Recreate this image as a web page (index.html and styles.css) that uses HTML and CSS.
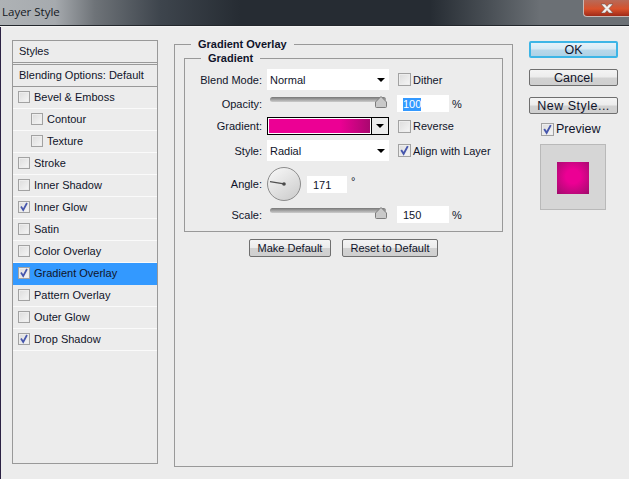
FILE: index.html
```html
<!DOCTYPE html>
<html lang="en">
<head>
<meta charset="utf-8">
<title>Layer Style</title>
<link rel="stylesheet" href="styles.css">
</head>
<body>
<div class="dialog">
  <header class="titlebar">
    <span class="title">Layer Style</span>
    <span class="close"><svg width="14" height="11" viewBox="0 0 14 11"><path d="M1 1h4l2 2.500L9 1h4L9 5.500 13 10H9L7 7.500 5 10H1l4-4.500z" fill="#f4f0ee" stroke="#5a4a48" stroke-width=".5"/></svg></span>
  </header>
  <div class="content">
    <aside class="styles">
      <div class="styles-head">Styles</div>
      <div class="styles-blend">Blending Options: Default</div>
      <div class="row"><i class="cb"></i>Bevel &amp; Emboss</div>
      <div class="row sub"><i class="cb"></i>Contour</div>
      <div class="row sub"><i class="cb"></i>Texture</div>
      <div class="row"><i class="cb"></i>Stroke</div>
      <div class="row"><i class="cb"></i>Inner Shadow</div>
      <div class="row"><i class="cb"><svg class="tick" viewBox="0 0 10 10"><path d="M2 4.500l2.200 3.500L8 1" /></svg></i>Inner Glow</div>
      <div class="row"><i class="cb"></i>Satin</div>
      <div class="row"><i class="cb"></i>Color Overlay</div>
      <div class="row active"><i class="cb"><svg class="tick" viewBox="0 0 10 10"><path d="M2 4.500l2.200 3.500L8 1" /></svg></i>Gradient Overlay</div>
      <div class="row"><i class="cb"></i>Pattern Overlay</div>
      <div class="row"><i class="cb"></i>Outer Glow</div>
      <div class="row"><i class="cb"><svg class="tick" viewBox="0 0 10 10"><path d="M2 4.500l2.200 3.500L8 1" /></svg></i>Drop Shadow</div>
    </aside>

    <fieldset class="outer">
      <legend>Gradient Overlay</legend>
      <fieldset class="inner">
        <legend>Gradient</legend>
        <div class="form-row h21">
          <label class="lbl">Blend Mode:</label>
          <div class="select">Normal<i class="caret"></i></div>
          <div class="check"><i class="cb big"></i>Dither</div>
        </div>
        <div class="form-row h17">
          <label class="lbl">Opacity:</label>
          <div class="slider"><svg class="thumb" width="12" height="12" viewBox="0 0 12 12"><path d="M6 .5L11.500 6v4.500q0 1-1 1h-9q-1 0-1-1V6z" fill="#c9c9c9" stroke="#7c7c7c"/></svg></div>
          <div class="field"><span class="sel">100</span></div>
          <span class="unit">%</span>
        </div>
        <div class="form-row h18">
          <label class="lbl">Gradient:</label>
          <div class="gradient"><div class="swatch"></div><div class="swatch-btn"><i class="caret"></i></div></div>
          <div class="check"><i class="cb big"></i>Reverse</div>
        </div>
        <div class="form-row h21">
          <label class="lbl">Style:</label>
          <div class="select">Radial<i class="caret"></i></div>
          <div class="check"><i class="cb big"><svg class="tick" viewBox="0 0 10 10"><path d="M2 4.500l2.200 3.500L8 1" /></svg></i>Align with Layer</div>
        </div>
        <div class="form-row h34 angle-row">
          <label class="lbl">Angle:</label>
          <svg class="dial" width="34" height="34" viewBox="0 0 34 34">
            <defs><linearGradient id="dg" x1="0" y1="0" x2="0.700" y2="1"><stop offset="0" stop-color="#fafafa"/><stop offset="1" stop-color="#cfcfcf"/></linearGradient></defs>
            <circle cx="17" cy="17" r="16.500" fill="url(#dg)" stroke="#8c8c8c"/>
            <path d="M3 14.600L17 16.800" stroke="#4f4f4f" stroke-width="1.200"/>
            <circle cx="17" cy="17" r="1.800" fill="#4a4a4a"/>
          </svg>
          <div class="field short">171</div>
          <span class="deg">°</span>
        </div>
        <div class="form-row h17">
          <label class="lbl">Scale:</label>
          <div class="slider"><svg class="thumb" width="12" height="12" viewBox="0 0 12 12"><path d="M6 .5L11.500 6v4.500q0 1-1 1h-9q-1 0-1-1V6z" fill="#c9c9c9" stroke="#7c7c7c"/></svg></div>
          <div class="field">150</div>
          <span class="unit">%</span>
        </div>
      </fieldset>
      <div class="defaults">
        <button class="btn make">Make Default</button>
        <button class="btn reset">Reset to Default</button>
      </div>
    </fieldset>

    <aside class="actions">
      <button class="btn big-btn ok">OK</button>
      <button class="btn big-btn">Cancel</button>
      <button class="btn big-btn wide-text">New Style...</button>
      <div class="preview-check"><i class="cb big"><svg class="tick" viewBox="0 0 10 10"><path d="M2 4.500l2.200 3.500L8 1" /></svg></i>Preview</div>
      <div class="preview"><div class="preview-square"></div></div>
    </aside>
  </div>
</div>
</body>
</html>
```
FILE: styles.css
```css
* { box-sizing: border-box; }
html, body { margin: 0; padding: 0; }
body {
  width: 629px;
  height: 479px;
  overflow: hidden;
  background: #ececec;
  font-family: "Liberation Sans", Arial, sans-serif;
  font-size: 11px;
  color: #10142a;
}
.dialog { width: 629px; height: 479px; display: flex; flex-direction: column; }

.titlebar {
  height: 27px;
  flex: none;
  display: flex;
  justify-content: space-between;
  align-items: flex-start;
  border-bottom: 1px solid #f4f4f4;
  box-shadow: inset 0 -1px 0 #23272c;
  background:
    linear-gradient(90deg, #aeb2b5 0, #a6aaae 55px, #6e7378 95px, #3e454d 160px, #262c33 240px, #262c33 430px, #4a5056 490px, #6b7075 540px, #6b7075 100%);
}
.title { font-family: "Open Sans", sans-serif; font-size: 11.500px; color: #14181e; padding: 3px 0 0 2px; line-height: 18px; }
.close {
  width: 46px; height: 17px;
  display: flex; align-items: center; justify-content: center;
  border: 1px solid #c8b8b4; border-top: 0; border-right: 0;
  border-radius: 0 0 0 4px;
  background: linear-gradient(#b86a58, #c95a3c 35%, #d9522c 55%, #a02a18 100%);
}

.content { flex: 1; display: flex; align-items: flex-start; border-left: 1px solid #2c2244; }

.styles {
  width: 146px; height: 424px;
  margin: 13px 0 0 11px;
  border: 1px solid #999;
  flex: none;
}
.styles-head { height: 24px; padding: 2px 0 0 6px; line-height: 16px; border-bottom: 3px double #999; }
.styles-blend { height: 22px; padding: 2px 0 0 6px; line-height: 17px; border-bottom: 1px solid #999; }
.row {
  height: 22px;
  display: flex; align-items: center;
  padding: 0 0 1px 5px;
  border-bottom: 1px solid #fafafa;
}
.row.sub { padding-left: 18px; }
.row.active { background: #3399ff; border-bottom-color: #3399ff; }
.cb {
  width: 12px; height: 12px; margin-right: 4px;
  flex: none; display: block;
  border: 1px solid #a2a2a2;
  background: linear-gradient(135deg, #dcdcdc, #f6f6f6);
  box-shadow: inset 0 0 0 1px #ededed;
}
.cb.big { width: 13px; height: 13px; margin-right: 2px; }
.tick { display: block; width: 100%; height: 100%; fill: none; stroke: #4656ac; stroke-width: 1.700; }

fieldset { margin: 0; min-width: 0; border: 1px solid #999; }
legend { font-weight: 700; font-size: 11px; line-height: 14px; height: 14px; padding: 0 7px; color: #10142a; }
.outer { flex: none; width: 339px; height: 430px; margin: 10px 0 0 16px; padding: 0 9px; }
.outer > legend { margin-left: 7px; }
.inner { padding: 4px 0 8px; }
.inner > legend { margin-left: 16px; }

.form-row { display: flex; align-items: center; margin-bottom: 5px; }
.form-row:last-child { margin-bottom: 0; }
.h21 { height: 21px; }
.h17 { height: 17px; }
.h18 { height: 18px; }
.h34 { height: 34px; }
.angle-row { margin-top: 6px; }
.lbl { width: 77px; margin-right: 5px; text-align: right; flex: none; }
.select {
  width: 122px; height: 21px; flex: none;
  margin-right: 9px;
  padding-left: 3px; line-height: 22px;
  background: #fff;
  display: flex; justify-content: space-between; align-items: center;
}
.caret { display: block; width: 0; height: 0; border: 4px solid transparent; border-top: 4px solid #000; border-bottom: 0; margin-right: 4px; border-left-width: 4.500px; border-right-width: 4.500px; }
.check { display: flex; align-items: center; }
.slider {
  position: relative;
  width: 116px; height: 5px; flex: none;
  margin: 0 11px 8px 3px;
  border-radius: 3px;
  background: linear-gradient(#777, #aaa 60%, #ccc);
}
.thumb { position: absolute; right: -1px; top: -1px; display: block; }
.field {
  width: 52px; height: 17px; flex: none;
  background: #fff; padding-left: 6px;
  line-height: 18px;
}
.field.short { width: 40px; }
.sel { background: #3399ff; color: #fff; display: inline-block; line-height: 13px; }
.unit { margin-left: 3px; }
.deg { margin: -7px 0 0 4px; }
.gradient {
  width: 122px; height: 18px; flex: none;
  margin-right: 9px;
  border: 1px solid #000;
  display: flex;
}
.swatch { flex: 1; border: 1px solid #fff; background: linear-gradient(90deg, #ec0094 70%, #a9086f); }
.swatch-btn { width: 17px; border-left: 1px solid #000; display: flex; align-items: center; justify-content: center; background: #ececec; }
.swatch-btn .caret { margin: 0; }
.dial { flex: none; margin-right: 6px; }

.defaults { display: flex; justify-content: center; gap: 11px; margin-top: 7px; }
.btn {
  height: 18px; padding: 0;
  font: inherit; color: inherit; line-height: 14px;
  border: 1px solid #6f6f6f;
  border-radius: 2px;
  background: linear-gradient(#f4f4f4, #ececec 48%, #d2d2d2 52%, #cfcfcf);
}
.make { width: 82px; }
.reset { width: 96px; }

.actions { flex: none; width: 89px; margin: 14px 0 0 16px; display: flex; flex-direction: column; align-items: flex-start; }
.big-btn { width: 89px; height: 17px; margin-bottom: 11px; font-size: 12.500px; }
.wide-text { letter-spacing: .5px; }
.ok { border: 2px solid #3db5e6; background: linear-gradient(#e4f2fa, #d7e9f4 48%, #b9d8ea 52%, #aed2e6); }
.preview-check { display: flex; align-items: center; margin: -3px 0 0 12px; height: 14px; font-size: 12.500px; }
.preview {
  width: 66px; height: 66px; margin: 8px 0 0 11px;
  border: 1px solid #b9b9b9;
  background: #d6d6d6;
  display: flex; align-items: center; justify-content: center;
}
.preview-square {
  width: 32px; height: 32px; margin: 2px 1px 0 0;
  background: radial-gradient(circle at 50% 45%, #ec0094 30%, #b00a75 85%, #9c0a68);
}
```
